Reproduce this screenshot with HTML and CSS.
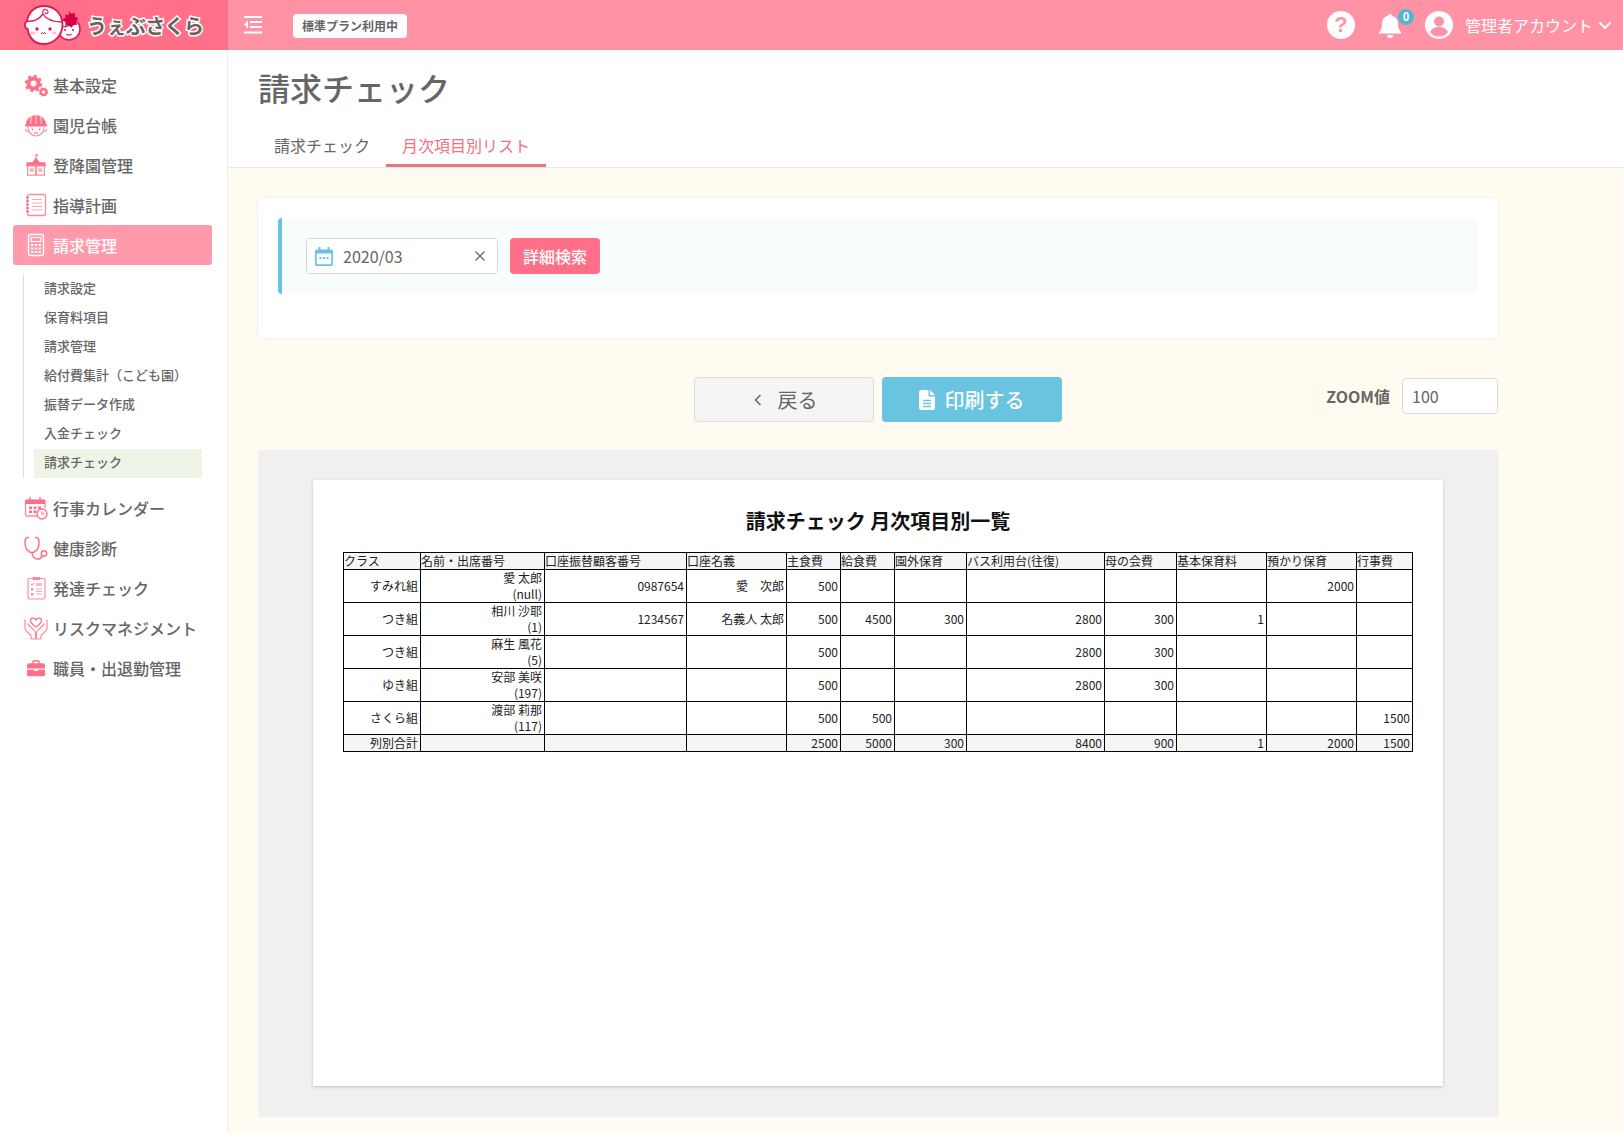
FILE: index.html
```html
<!DOCTYPE html>
<html lang="ja">
<head>
<meta charset="utf-8">
<title>請求チェック</title>
<link rel="stylesheet" href="styles.css">
</head>
<body>
<header class="topbar">
  <div class="brand">
    <svg class="brand-mark" viewBox="0 0 60 44" width="60" height="44">
      <circle cx="47" cy="26" r="11" fill="#fff" stroke="#e3195a" stroke-width="1.600"/>
      <path d="M38 23c4 1.500 11 .5 15-5" fill="none" stroke="#e3195a" stroke-width="1.200"/>
      <circle cx="43" cy="27" r="1.100" fill="#e3195a"/><circle cx="51" cy="27" r="1.100" fill="#e3195a"/>
      <path d="M44.500 31q2.500 2.500 5 0" fill="none" stroke="#e3195a" stroke-width="1.100"/>
      <path d="M5 26C2 24 2 20 5 18.500 6 9 13 3 22 3c10 0 18 7 18.500 18 .3 11-8 20-19 20-8 0-14-5-16-15z" fill="#fff" stroke="#e3195a" stroke-width="1.900"/>
      <path d="M5.500 18C11 19 17 16 21 11c3 5 9 8 19 8" fill="none" stroke="#e3195a" stroke-width="1.400"/>
      <path d="M21 11c-2-5 5-6 5-2 0 2-3 2-3 .5" fill="none" stroke="#e3195a" stroke-width="1.100"/>
      <circle cx="15" cy="26" r="1.700" fill="#e3195a"/><circle cx="28" cy="26" r="1.700" fill="#e3195a"/>
      <path d="M19 31q1.200-3 2.400 0m0 0q1.200-3 2.400 0" fill="none" stroke="#e3195a" stroke-width="1"/>
      <ellipse cx="11" cy="30" rx="2.500" ry="1.500" fill="#ffc2cf"/><ellipse cx="32" cy="30" rx="2.500" ry="1.500" fill="#ffc2cf"/>
      <path d="M47 8l2.200 2.800 3.600-1 .1 3.700 3.300 1.700-2.200 3 1.200 3.500-3.600.2-2.300 2.800-2.600-2.500-3.500.6.200-3.600-2.900-2.200 3-2 .1-3.700 3.500.9z" fill="#d4004a"/>
    </svg>
    <span class="brand-name">うぇぶさくら</span>
  </div>
  <div class="topbar-main">
    <svg class="menu-toggle" viewBox="0 0 18 18" width="18" height="18" fill="#fff">
      <rect x="0" y="0" width="18" height="2"/><rect x="6" y="5" width="12" height="2"/><rect x="6" y="10" width="12" height="2"/><rect x="0" y="15.500" width="18" height="2"/><path d="M4 4.500v8L0 8.500z"/>
    </svg>
    <span class="plan-pill">標準プラン利用中</span>
    <div class="topbar-right">
      <span class="help-icon">?</span>
      <span class="bell">
        <svg viewBox="0 0 24 26" width="24" height="26" fill="#fff"><path d="M12 2c1.200 0 2 .8 2 1.800 4 1 6 4.200 6 8.200 0 4 1 6 3 8v1.500H1V20c2-2 3-4 3-8s2-7.200 6-8.200C10 2.800 10.800 2 12 2z"/><path d="M9 23h6a3 3 0 0 1-6 0z"/></svg>
        <span class="bell-badge">0</span>
      </span>
      <svg class="avatar" viewBox="0 0 28 28" width="28" height="28"><circle cx="14" cy="14" r="14" fill="#fff"/><circle cx="14" cy="10.500" r="5" fill="#ff92a5"/><path d="M5 21c2-4 5-5 9-5s7 1 9 5c-2 3-5 4.500-9 4.500S7 24 5 21z" fill="#ff92a5"/></svg>
      <span class="account-name">管理者アカウント</span>
      <svg class="chevron" viewBox="0 0 14 9" width="14" height="9"><path d="M1.500 1.500L7 7l5.500-5.500" fill="none" stroke="#fff" stroke-width="2"/></svg>
    </div>
  </div>
</header>

<div class="layout">
  <aside class="sidebar">
    <a class="nav-item">
      <svg class="nav-icon" viewBox="0 0 24 24"><circle cx="9.500" cy="10.500" r="5" fill="none" stroke="#ff7088" stroke-width="4"/><circle cx="9.500" cy="10.500" r="7.500" fill="none" stroke="#ff7088" stroke-width="2.600" stroke-dasharray="3 2.890"/><circle cx="19.500" cy="19" r="2.800" fill="none" stroke="#ff7088" stroke-width="2.200"/><circle cx="19.500" cy="19" r="4" fill="none" stroke="#ff7088" stroke-width="1.200" stroke-dasharray="1.500 1.640"/></svg>
      基本設定
    </a>
    <a class="nav-item">
      <svg class="nav-icon" viewBox="0 0 24 24"><path d="M2 11a10 9 0 0 1 20 0z" fill="#ff7088"/><path d="M12 2v9M7.500 3.500L6.500 11M16.500 3.500l1 7.500" stroke="#fff" stroke-width=".7" fill="none"/><rect x="1" y="11" width="22" height="2.600" rx="1.300" fill="#ff7088"/><path d="M4 14c0 6 4 9 8 9s8-3 8-9M1.500 16c0 2 1.500 2.500 3 2.500M22.500 16c0 2-1.500 2.500-3 2.500" fill="none" stroke="#ff8a9d" stroke-width="1.100"/><circle cx="8.500" cy="16.500" r=".9" fill="#ff7088"/><circle cx="15.500" cy="16.500" r=".9" fill="#ff7088"/><path d="M10 20h4" stroke="#ff7088" stroke-width="1.100"/></svg>
      園児台帳
    </a>
    <a class="nav-item">
      <svg class="nav-icon" viewBox="-1 -1 26 26"><path d="M12 0v5" stroke="#ff7088" stroke-width="1"/><path d="M12 0l3 1.500-3 1z" fill="#ff7088"/><path d="M12 4l4 5h6l1 4H1l1-4h6z" fill="#ff7088"/><rect x="3" y="13" width="18" height="10" fill="none" stroke="#ff8a9d" stroke-width="1.300"/><rect x="5.500" y="15.500" width="4" height="4" fill="#ffb0bd"/><rect x="14.500" y="15.500" width="4" height="4" fill="#ffb0bd"/><rect x="11" y="13" width="2" height="10" fill="#ff8a9d"/></svg>
      登降園管理
    </a>
    <a class="nav-item">
      <svg class="nav-icon" viewBox="0 0 24 24"><rect x="3.500" y="1.500" width="18" height="21" rx="2" fill="none" stroke="#ff8a9d" stroke-width="1.300"/><path d="M8 6.500h10M8 10h10M8 13.500h10M8 17h10" stroke="#ffa5b3" stroke-width="1.100"/><path d="M2 4.500h3M2 8h3M2 11.500h3M2 15h3M2 18.500h3" stroke="#ff7088" stroke-width="1.300"/></svg>
      指導計画
    </a>
    <a class="nav-item nav-item-active">
      <svg class="nav-icon" viewBox="0 0 24 24"><rect x="4.500" y="1.500" width="15" height="21" rx="2" fill="none" stroke="#fff" stroke-width="1.400"/><rect x="7" y="4.500" width="10" height="4" fill="none" stroke="#fff" stroke-width="1.100"/><path d="M7 11h2.400v2H7zM10.800 11h2.400v2h-2.400zM14.600 11H17v2h-2.400zM7 14.500h2.400v2H7zM10.800 14.500h2.400v2h-2.400zM14.600 14.500H17v2h-2.400zM7 18h2.400v2H7zM10.800 18h2.400v2h-2.400zM14.600 18H17v2h-2.400z" fill="#fff"/></svg>
      請求管理
    </a>
    <ul class="subnav">
      <li class="sub-item">請求設定</li>
      <li class="sub-item">保育料項目</li>
      <li class="sub-item">請求管理</li>
      <li class="sub-item">給付費集計（こども園）</li>
      <li class="sub-item">振替データ作成</li>
      <li class="sub-item">入金チェック</li>
      <li class="sub-item sub-item-active">請求チェック</li>
    </ul>
    <a class="nav-item">
      <svg class="nav-icon" viewBox="0 0 24 24"><path d="M15 20H2.500a1 1 0 0 1-1-1V5a1 1 0 0 1 1-1H20a1 1 0 0 1 1 1v7" fill="none" stroke="#ff8a9d" stroke-width="1.300"/><path d="M1.500 4h19.500v4H1.500z" fill="#ff7088"/><path d="M6 1v5M16 1v5" stroke="#ff7088" stroke-width="1.400"/><path d="M5 10.500h3v2.500H5zM9.500 10.500h3v2.500h-3zM14 10.500h3v2.500h-3zM5 14.500h3V17H5zM9.500 14.500h3V17h-3z" fill="#ff7088"/><circle cx="18" cy="18" r="5" fill="#fff" stroke="#ff7088" stroke-width="1.300"/><path d="M18 15.200V18h2.600" fill="none" stroke="#ff7088" stroke-width="1.100"/></svg>
      行事カレンダー
    </a>
    <a class="nav-item">
      <svg class="nav-icon" viewBox="0 0 24 24"><path d="M5 1.500H3.500C1.500 1.500 1 4 1 7c0 6 3.500 9.500 7 9.500S15 13 15 7c0-3-.5-5.500-2.500-5.500H11" fill="none" stroke="#ff7088" stroke-width="1.500"/><path d="M8 16.500c0 4 2.500 6.500 6 6.500 2.500 0 3.500-1.500 3.800-3" fill="none" stroke="#ff7088" stroke-width="1.500"/><circle cx="20" cy="17.500" r="2.700" fill="none" stroke="#ff7088" stroke-width="1.500"/></svg>
      健康診断
    </a>
    <a class="nav-item">
      <svg class="nav-icon" viewBox="0 0 24 24"><rect x="4" y="2.500" width="17" height="20.500" rx="1.500" fill="none" stroke="#ff8a9d" stroke-width="1.200"/><rect x="9" y="1" width="7" height="3" fill="#ff8a9d"/><path d="M7 8l1.200 1.200L10 7" fill="none" stroke="#ff7088" stroke-width="1"/><path d="M12 7h6v3h-6z" fill="#ffb8c3"/><rect x="7" y="12" width="2.400" height="2.400" fill="#ff8a9d"/><rect x="7" y="17" width="2.400" height="2.400" fill="#ff8a9d"/><path d="M12 13h6M12 15.500h6M12 18h6" stroke="#ffa5b3" stroke-width="1"/></svg>
      発達チェック
    </a>
    <a class="nav-item">
      <svg class="nav-icon" viewBox="0 0 24 24"><path d="M12 11C8.500 8.500 6.500 6.700 6.500 4.500 6.500 1.800 10.800 1 12 4c1.200-3 5.500-2.200 5.500.5 0 2.200-2 4-5.500 6.500z" fill="none" stroke="#ff7088" stroke-width="1.300"/><path d="M1 3.500V12c0 1.500.7 2.500 1.800 3.500L7 19.500V23h4.500v-5.500c0-1.500-.7-2.700-1.800-3.700L6 10.500 3.500 7.500" fill="none" stroke="#ff8a9d" stroke-width="1.200"/><path d="M23 3.500V12c0 1.500-.7 2.500-1.800 3.500L17 19.500V23h-4.500v-5.500c0-1.500.7-2.700 1.800-3.700l3.700-3.300 2.500-3" fill="none" stroke="#ff8a9d" stroke-width="1.200"/></svg>
      リスクマネジメント
    </a>
    <a class="nav-item">
      <svg class="nav-icon" viewBox="-2 -2 28 28"><path d="M8.500 7V4.800c0-.7.6-1.300 1.300-1.300h4.400c.7 0 1.300.6 1.300 1.300V7" fill="none" stroke="#ff7088" stroke-width="1.800"/><path d="M4 6.500h16a2.500 2.500 0 0 1 2.500 2.500v3.500h-21V9A2.500 2.500 0 0 1 4 6.500zM1.500 14h8.500v1.500h4V14h8.500v6a1.500 1.500 0 0 1-1.500 1.500H3A1.500 1.500 0 0 1 1.500 20z" fill="#ff7088"/></svg>
      職員・出退勤管理
    </a>
  </aside>

  <main class="main">
    <div class="page-head">
      <h1 class="page-title">請求チェック</h1>
      <nav class="tabs">
        <a class="tab">請求チェック</a>
        <a class="tab tab-active">月次項目別リスト</a>
      </nav>
    </div>
    <div class="content">
      <section class="card">
        <div class="filter">
          <div class="date-input">
            <svg viewBox="0 0 18 19" width="18" height="19"><path d="M2 2.500h14a2 2 0 0 1 2 2V17a2 2 0 0 1-2 2H2a2 2 0 0 1-2-2V4.500a2 2 0 0 1 2-2z" fill="#68c4e0"/><rect x="1.700" y="6.500" width="14.600" height="10.800" rx="1" fill="#fff"/><rect x="3.500" y="0" width="2" height="4" fill="#68c4e0"/><rect x="12.500" y="0" width="2" height="4" fill="#68c4e0"/><path d="M4.500 10h2v2h-2zM8 10h2v2H8zM11.500 10h2v2h-2z" fill="#68c4e0"/></svg>
            <span class="date-value">2020/03</span>
            <svg class="date-clear" viewBox="0 0 10 10" width="10" height="10"><path d="M.5.500l9 9m0-9l-9 9" stroke="#666" stroke-width="1.300"/></svg>
          </div>
          <button class="search-btn">詳細検索</button>
        </div>
      </section>

      <div class="toolbar">
        <span></span>
        <div class="toolbar-buttons">
          <button class="btn btn-back">
            <svg viewBox="0 0 8 12" width="8" height="12"><path d="M6.500 1L1.500 6l5 5" fill="none" stroke="#666" stroke-width="1.500"/></svg>
            戻る
          </button>
          <button class="btn btn-print">
            <svg viewBox="0 0 16 20" width="16" height="20"><path d="M2 0h7.500v5.500a1 1 0 0 0 1 1H16V18a2 2 0 0 1-2 2H2a2 2 0 0 1-2-2V2a2 2 0 0 1 2-2zM11 0l5 5h-5z" fill="#fff"/><path d="M4 10.500h8M4 13.500h8M4 16.500h8" stroke="#68c4e0" stroke-width="1.500"/></svg>
            印刷する
          </button>
        </div>
        <div class="zoom-field">
          <span class="zoom-label">ZOOM値</span>
          <span class="zoom-input">100</span>
        </div>
      </div>

      <section class="preview">
        <div class="paper">
          <h2 class="paper-title">請求チェック 月次項目別一覧</h2>
          <table class="sheet">
            <colgroup>
              <col class="c77"><col class="c124"><col class="c142"><col class="c100"><col class="c54"><col class="c54"><col class="c72"><col class="c138"><col class="c72"><col class="c90"><col class="c90"><col class="c56">
            </colgroup>
            <thead>
              <tr><th>クラス</th><th>名前・出席番号</th><th>口座振替顧客番号</th><th>口座名義</th><th>主食費</th><th>給食費</th><th>園外保育</th><th>バス利用台(往復)</th><th>母の会費</th><th>基本保育料</th><th>預かり保育</th><th>行事費</th></tr>
            </thead>
            <tbody>
              <tr><td>すみれ組</td><td>愛 太郎<br>(null)</td><td>0987654</td><td>愛　次郎</td><td>500</td><td></td><td></td><td></td><td></td><td></td><td>2000</td><td></td></tr>
              <tr><td>つき組</td><td>相川 沙耶<br>(1)</td><td>1234567</td><td>名義人 太郎</td><td>500</td><td>4500</td><td>300</td><td>2800</td><td>300</td><td>1</td><td></td><td></td></tr>
              <tr><td>つき組</td><td>麻生 風花<br>(5)</td><td></td><td></td><td>500</td><td></td><td></td><td>2800</td><td>300</td><td></td><td></td><td></td></tr>
              <tr><td>ゆき組</td><td>安部 美咲<br>(197)</td><td></td><td></td><td>500</td><td></td><td></td><td>2800</td><td>300</td><td></td><td></td><td></td></tr>
              <tr><td>さくら組</td><td>渡部 莉那<br>(117)</td><td></td><td></td><td>500</td><td>500</td><td></td><td></td><td></td><td></td><td></td><td>1500</td></tr>
            </tbody>
            <tfoot>
              <tr><td>列別合計</td><td></td><td></td><td></td><td>2500</td><td>5000</td><td>300</td><td>8400</td><td>900</td><td>1</td><td>2000</td><td>1500</td></tr>
            </tfoot>
          </table>
        </div>
      </section>
    </div>
  </main>
</div>
</body>
</html>
```
FILE: styles.css
```css
* { box-sizing: border-box; }
html, body { margin: 0; height: 100%; }
body {
  font-family: "Noto Sans CJK JP", "Noto Sans", sans-serif;
  color: #666;
  background: #fff;
  overflow: hidden;
}

/* top bar */
.topbar { display: flex; height: 50px; background: #ff92a5; }
.brand {
  width: 228px;
  flex: none;
  display: flex;
  align-items: center;
  gap: 5px;
  padding-left: 22px;
  background: #ff7088;
}
.brand-mark { flex: none; }
.brand-name {
  font-size: 20px;
  font-weight: 700;
  letter-spacing: -0.6px;
  white-space: nowrap;
  color: #6a5f61;
  -webkit-text-stroke: 3px #fff;
  paint-order: stroke fill;
}
.topbar-main { flex: 1; display: flex; align-items: center; padding-left: 16px; }
.menu-toggle { flex: none; }
.plan-pill {
  margin: 2px 0 0 31px;
  width: 114px;
  height: 24px;
  line-height: 24px;
  text-align: center;
  font-size: 12px;
  font-weight: 700;
  background: #fff;
  border-radius: 4px;
  color: #666;
}
.topbar-right { margin-left: auto; display: flex; align-items: center; padding-right: 11px; color: #fff; }
.help-icon {
  width: 28px;
  height: 28px;
  border-radius: 50%;
  background: #fff;
  color: #ff92a5;
  font: 700 22px/28px "Liberation Sans", sans-serif;
  text-align: center;
}
.bell { position: relative; margin-left: 23px; width: 26px; height: 26px; display: block; }
.bell svg { display: block; }
.bell-badge {
  position: absolute;
  left: 20px;
  top: -3px;
  width: 16px;
  height: 16px;
  border-radius: 50%;
  background: #4fb6d6;
  color: #fff;
  font-size: 11px;
  font-weight: 700;
  line-height: 15px;
  text-align: center;
}
.avatar { margin-left: 21px; flex: none; }
.account-name { margin-left: 12px; font-size: 16px; white-space: nowrap; }
.chevron { margin-left: 5px; flex: none; }

/* layout */
.layout { display: flex; height: 1083px; }
.sidebar {
  width: 228px;
  flex: none;
  border-right: 1px solid #ececec;
  padding-top: 15px;
  background: #fff;
}
.nav-item {
  display: flex;
  align-items: center;
  height: 40px;
  margin: 0 15px 0 13px;
  padding-left: 11px;
  gap: 5px;
  font-size: 16px;
  font-weight: 500;
  color: #666;
  border-radius: 3px;
  white-space: nowrap;
}
.nav-icon { width: 24px; height: 24px; flex: none; }
.nav-item-active { background: #ff9aac; color: #fff; }
.subnav {
  list-style: none;
  margin: 10px 25px 10px 23px;
  padding: 0 0 0 10px;
  border-left: 1px solid #ddd;
}
.sub-item {
  height: 29px;
  line-height: 25px;
  padding-left: 10px;
  font-size: 13px;
  font-weight: 500;
  color: #666;
  white-space: nowrap;
}
.sub-item-active { background: #eff5e6; }

/* main */
.main { flex: 1; min-width: 0; display: flex; flex-direction: column; }
.page-head { height: 118px; border-bottom: 1px solid #e8e8e8; padding: 13px 0 0 30px; }
.page-title { margin: 0; font-size: 32px; font-weight: 500; line-height: 48px; color: #666; }
.tabs { display: flex; margin: 9px 0 0 0; }
.tab {
  height: 47px;
  padding: 0 16px;
  font-size: 16px;
  line-height: 50px;
  color: #666;
  white-space: nowrap;
}
.tab-active { color: #f0717f; border-bottom: 3px solid #f0717f; }

.content { flex: 1; background: #fffbf0; padding: 30px 125px 0 30px; }
.card {
  height: 140px;
  padding: 20px;
  background: #fff;
  border-radius: 6px;
  box-shadow: 0 0 2px rgba(0,0,0,.14);
}
.filter {
  display: flex;
  align-items: center;
  gap: 12px;
  height: 76px;
  padding-left: 24px;
  background: #f7fcfd;
  border-left: 4px solid #68c4e0;
  border-radius: 4px;
}
.date-input {
  display: flex;
  align-items: center;
  width: 192px;
  height: 36px;
  padding: 0 12px 0 8px;
  background: #fff;
  border: 1px solid #d8d8d8;
  border-radius: 4px;
}
.date-value { margin-left: 10px; font-size: 16px; color: #666; }
.date-clear { margin-left: auto; }
.search-btn {
  width: 90px;
  height: 36px;
  padding: 0;
  border: 0;
  border-radius: 4px;
  background: #ff7088;
  color: #fff;
  font: 500 16px "Noto Sans CJK JP", sans-serif;
}

.toolbar {
  display: grid;
  grid-template-columns: 1fr auto 1fr;
  align-items: center;
  margin-top: 39px;
  height: 45px;
}
.toolbar-buttons { display: flex; gap: 8px; }
.btn {
  display: flex;
  align-items: center;
  justify-content: center;
  gap: 10px;
  width: 180px;
  height: 45px;
  padding: 0;
  border-radius: 4px;
  font: 400 20px "Noto Sans CJK JP", sans-serif;
}
.btn-back { background: #f5f5f5; border: 1px solid #ddd; color: #666; gap: 16px; padding-left: 3px; }
.btn-print { background: #68c4e0; border: 0; color: #fff; font-weight: 500; gap: 10px; padding-right: 1px; }
.zoom-field { display: flex; align-items: center; justify-content: flex-end; gap: 12px; margin-top: -7px; }
.zoom-label { font-size: 16px; font-weight: 700; color: #666; }
.zoom-input {
  width: 96px;
  height: 36px;
  line-height: 34px;
  padding-left: 9px;
  font-size: 16px;
  color: #666;
  background: #fff;
  border: 1px solid #d8d8d8;
  border-radius: 4px;
}

.preview { margin-top: 28px; height: 667px; padding: 30px 55px; background: #f0f0f0; }
.paper {
  height: 606px;
  padding: 26px 30px 0;
  background: #fff;
  box-shadow: 0 1px 3px rgba(0,0,0,.2);
}
.paper-title {
  margin: 0 0 16px;
  height: 30px;
  line-height: 30px;
  text-align: center;
  font-size: 20px;
  font-weight: 700;
  color: #111;
}
.sheet {
  width: 1070px;
  table-layout: fixed;
  border-collapse: collapse;
  font-size: 12px;
  line-height: 16px;
  color: #222;
}
.sheet th, .sheet td {
  border: 1px solid #000;
  padding: 0 2px 0 0;
  text-align: right;
  font-weight: 400;
  white-space: nowrap;
  overflow: hidden;
}
.sheet th { text-align: left; background: #f5f5f5; }
.sheet tfoot td { background: #f5f5f5; }
.c77 { width: 77px; }
.c124 { width: 124px; }
.c142 { width: 142px; }
.c100 { width: 100px; }
.c54 { width: 54px; }
.c72 { width: 72px; }
.c138 { width: 138px; }
.c90 { width: 90px; }
.c56 { width: 56px; }
```
